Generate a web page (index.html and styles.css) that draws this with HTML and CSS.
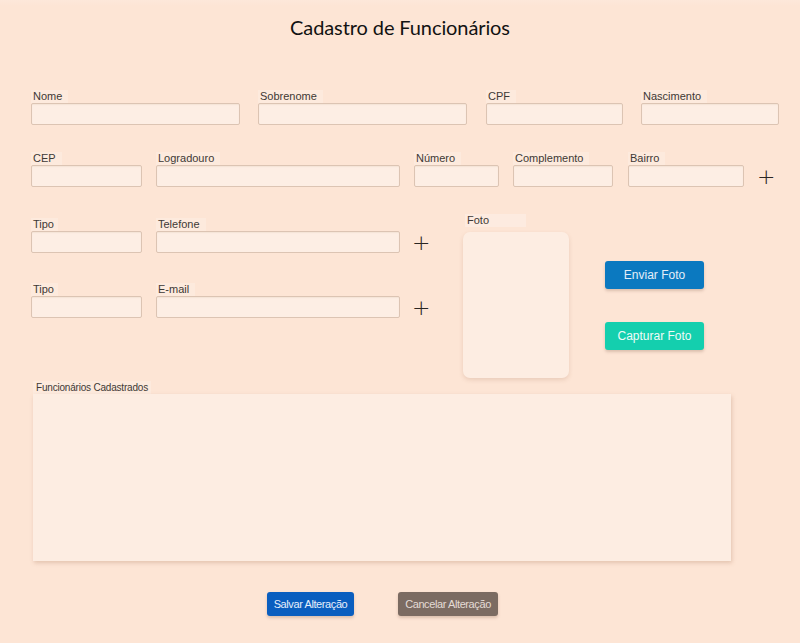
FILE: index.html
```html
<!DOCTYPE html>
<html lang="pt-BR">
<head>
<meta charset="utf-8">
<title>Cadastro de Funcionários</title>
<link rel="stylesheet" href="styles.css">
</head>
<body>
<div class="app">
  <h1 class="title">Cadastro de Funcionários</h1>

  <div class="row row-1">
    <div class="field w-nome"><span class="label">Nome</span><div class="input"></div></div>
    <div class="field w-sobrenome"><span class="label">Sobrenome</span><div class="input"></div></div>
    <div class="field w-cpf"><span class="label">CPF</span><div class="input"></div></div>
    <div class="field w-nasc"><span class="label">Nascimento</span><div class="input"></div></div>
  </div>

  <div class="row row-2">
    <div class="field w-cep"><span class="label">CEP</span><div class="input"></div></div>
    <div class="field w-logr"><span class="label">Logradouro</span><div class="input"></div></div>
    <div class="field w-num"><span class="label">Número</span><div class="input"></div></div>
    <div class="field w-comp"><span class="label">Complemento</span><div class="input"></div></div>
    <div class="field w-bairro"><span class="label">Bairro</span><div class="input"></div></div>
    <span class="plus plus-bairro">+</span>
  </div>

  <div class="middle">
    <div class="contacts">
      <div class="row contact-row">
        <div class="field w-cep"><span class="label">Tipo</span><div class="input"></div></div>
        <div class="field w-logr"><span class="label">Telefone</span><div class="input"></div></div>
        <span class="plus">+</span>
      </div>
      <div class="row contact-row second">
        <div class="field w-cep"><span class="label">Tipo</span><div class="input"></div></div>
        <div class="field w-logr"><span class="label">E-mail</span><div class="input"></div></div>
        <span class="plus">+</span>
      </div>
    </div>

    <div class="photo">
      <span class="label photo-label">Foto</span>
      <div class="photo-box"></div>
    </div>

    <div class="photo-actions">
      <button class="btn btn-send">Enviar Foto</button>
      <button class="btn btn-capture">Capturar Foto</button>
    </div>
  </div>

  <div class="list">
    <span class="label list-label">Funcionários Cadastrados</span>
    <div class="list-panel"></div>
  </div>

  <div class="footer">
    <button class="btn btn-save">Salvar Alteração</button>
    <button class="btn btn-cancel">Cancelar Alteração</button>
  </div>
</div>
</body>
</html>
```

FILE: styles.css
```css
* { box-sizing: border-box; }

html, body {
  margin: 0;
  padding: 0;
  background: #fde5d5;
}

body {
  font-family: "Liberation Sans", Arial, sans-serif;
  color: #3a3633;
  width: 800px;
  height: 643px;
  overflow: hidden;
}

.app {
  padding: 0 0 0 31px;
  height: 643px;
  background: linear-gradient(#fde8da 0, #fde5d5 6px);
}

.title {
  margin: 0 0 0 -31px;
  padding-top: 13px;
  height: 90px;
  text-align: center;
  font-family: Lato, "Open Sans", sans-serif;
  font-weight: 400;
  font-size: 20px;
  line-height: 28px;
  color: #121212;
  letter-spacing: -0.1px;
}

.row {
  display: flex;
  align-items: flex-end;
}

.row-1 { gap: 18px; }
.row-1 .w-cpf { margin-left: 1px; }
.row-2 { margin-top: 27px; gap: 14px; }
.row-2 .w-bairro { margin-left: 1px; }

.field {
  display: flex;
  flex-direction: column;
  align-items: flex-start;
}

.label {
  display: inline-block;
  height: 13px;
  line-height: 13px;
  font-size: 11px;
  padding: 0 6px 0 2px;
  background: #fdeadd;
  color: #3d3935;
  white-space: nowrap;
}

.input {
  width: 100%;
  height: 22px;
  background: #fdeee4;
  border: 1px solid #dcc4b3;
  border-radius: 2px;
  box-shadow: inset 0 1px 1px rgba(150, 110, 80, 0.08);
}

.w-nome, .w-sobrenome { width: 209px; }
.w-cpf { width: 137px; }
.w-nasc { width: 138px; }
.w-cep { width: 111px; }
.w-logr { width: 244px; }
.w-num { width: 85px; }
.w-comp { width: 100px; }
.w-bairro { width: 116px; }

.plus {
  display: block;
  width: 16px;
  height: 22px;
  line-height: 22px;
  text-align: center;
  font-family: "DejaVu Sans", sans-serif;
  font-size: 22px;
  font-weight: 300;
  color: #2a2623;
  margin-left: -1px;
  transform: translateY(1px);
}

.plus-bairro { margin-left: -1px; }
.contact-row .plus { margin-left: -2px; }

.middle {
  margin-top: 27px;
  display: flex;
  align-items: flex-start;
  height: 167px;
}

.contacts {
  padding-top: 4px;
  width: 432px;
}

.contact-row { gap: 14px; }
.contact-row .w-cep .label { padding-right: 4px; }
.contact-row.second { margin-top: 30px; }

.photo {
  display: flex;
  flex-direction: column;
  width: 106px;
}

.photo-label {
  width: 61px;
  margin-left: 2px;
  background: #fdebe0;
}

.photo-box {
  margin-top: 5px;
  height: 146px;
  background: #fdede2;
  border-radius: 7px;
  box-shadow: 0 2px 4px rgba(170, 120, 90, 0.22);
}

.photo-actions {
  margin-left: 36px;
  padding-top: 47px;
  display: flex;
  flex-direction: column;
  gap: 33px;
}

.btn {
  border: none;
  border-radius: 3px;
  font-family: "Liberation Sans", Arial, sans-serif;
  cursor: pointer;
  padding: 0;
  box-shadow: 0 2px 3px rgba(120, 80, 60, 0.25);
}

.btn-send, .btn-capture {
  width: 99px;
  height: 28px;
  font-size: 12px;
  color: #e4eef8;
}

.btn-send { background: #0b79c0; }
.btn-capture { background: #14cfae; color: #f0fbf8; }

.list {
  margin-left: 2px;
  display: flex;
  flex-direction: column;
  align-items: flex-start;
}

.list-label {
  font-size: 10px;
  letter-spacing: -0.2px;
  padding: 0 3px 0 3px;
  background: #fdeadd;
}

.list-panel {
  width: 698px;
  height: 167px;
  background: #fdede2;
  box-shadow: 1px 2px 4px rgba(170, 120, 90, 0.3);
}

.footer {
  margin-top: 31px;
  padding-left: 236px;
  display: flex;
  gap: 44px;
}

.btn-save, .btn-cancel {
  height: 24px;
  font-size: 11px;
  letter-spacing: -0.4px;
}

.btn-save {
  width: 87px;
  background: #0a5ebf;
  color: #e6eefb;
}

.btn-cancel {
  width: 100px;
  background: #7b6b62;
  color: #e4dbd5;
}
```
